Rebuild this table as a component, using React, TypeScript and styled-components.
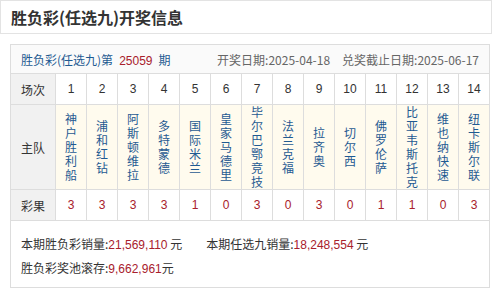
import React from 'react';
import styled, { createGlobalStyle } from 'styled-components';

const GlobalStyle = createGlobalStyle`
  body {
    margin: 0;
    background: #fff;
    font-family: 'Liberation Sans', 'Noto Sans CJK SC', sans-serif;
    font-size: 12px;
    color: #333;
  }
`;

const StyledTitleBar = styled.div`
  box-sizing: border-box;
  height: 34px;
  border: 1px solid #e3e3e3;
  display: flex;
  align-items: center;
  padding-left: 10px;
  margin-bottom: 10px;
`;
const StyledTitle = styled.h2`
  margin: 0;
  font-size: 16px;
  font-weight: bold;
  color: #333;
  font-family: 'Noto Sans CJK SC', sans-serif;
`;
const StyledPanel = styled.div`
  box-sizing: border-box;
  width: 480px;
  margin-left: 10px;
  border: 1px solid #dddddd;
`;
const StyledInfoRow = styled.div`
  height: 28px;
  display: flex;
  align-items: center;
  justify-content: space-between;
  padding: 0 10px;
  background: #fafafa;
  border-bottom: 1px solid #dddddd;
  font-family: 'Noto Sans CJK SC', sans-serif;
`;
const StyledIssue = styled.span`
  color: #1f5a92;
`;
const StyledRed = styled.span<{ $spaced?: boolean }>`
  color: #a8202c;
  font-family: 'Liberation Sans', sans-serif;
  margin: ${(p) => (p.$spaced ? '0 6px' : '0')};
`;
const StyledDates = styled.div`
  display: flex;
  gap: 12px;
  color: #666;
`;
const StyledGrid = styled.div`
  display: grid;
  grid-template-columns: 44px repeat(14, 30px);
  grid-template-rows: 30px 84px 30px;
  gap: 1px;
  background: #dddddd;
`;
const StyledCell = styled.div<{ $head?: boolean; $team?: boolean }>`
  display: flex;
  align-items: center;
  justify-content: center;
  background: ${(p) => (p.$head ? '#f1f1f1' : p.$team ? '#fffbee' : '#fff')};
  color: ${(p) => (p.$team ? '#1f5a92' : '#333')};
  font-family: 'Noto Sans CJK SC', sans-serif;
`;
const StyledTeamName = styled.span`
  width: 12px;
  line-height: 14px;
  word-break: break-all;
  text-align: center;
`;
const StyledNum = styled.span`
  font-family: 'Liberation Sans', sans-serif;
  color: #333;
`;
const StyledResult = styled.span`
  font-family: 'Liberation Sans', sans-serif;
  color: #a8202c;
`;
const StyledFooter = styled.div`
  border-top: 1px solid #dddddd;
  padding: 11px 10px 7px;
  font-family: 'Noto Sans CJK SC', sans-serif;
  color: #333;
`;
const StyledFooterLine = styled.div`
  display: flex;
  gap: 24px;
  line-height: 24px;
  height: 24px;
`;

const teams = [
  '神户胜利船', '浦和红钻', '阿斯顿维拉', '多特蒙德', '国际米兰', '皇家马德里', '毕尔巴鄂竞技',
  '法兰克福', '拉齐奥', '切尔西', '佛罗伦萨', '比亚韦斯托克', '维也纳快速', '纽卡斯尔联',
];
const results = ['3', '3', '3', '3', '1', '0', '3', '0', '3', '0', '1', '1', '0', '3'];

export default function App() {
  return (
    <>
      <GlobalStyle />
      <StyledTitleBar>
        <StyledTitle>胜负彩(任选九)开奖信息</StyledTitle>
      </StyledTitleBar>
      <StyledPanel>
        <StyledInfoRow>
          <StyledIssue>
            胜负彩(任选九)第<StyledRed $spaced>25059</StyledRed>期
          </StyledIssue>
          <StyledDates>
            <span>开奖日期:2025-04-18</span>
            <span>兑奖截止日期:2025-06-17</span>
          </StyledDates>
        </StyledInfoRow>
        <StyledGrid>
          <StyledCell $head>场次</StyledCell>
          {teams.map((_, i) => (
            <StyledCell key={'n' + i}>
              <StyledNum>{i + 1}</StyledNum>
            </StyledCell>
          ))}
          <StyledCell $head>主队</StyledCell>
          {teams.map((t) => (
            <StyledCell key={t} $team>
              <StyledTeamName>{t}</StyledTeamName>
            </StyledCell>
          ))}
          <StyledCell $head>彩果</StyledCell>
          {results.map((r, i) => (
            <StyledCell key={'r' + i}>
              <StyledResult>{r}</StyledResult>
            </StyledCell>
          ))}
        </StyledGrid>
        <StyledFooter>
          <StyledFooterLine>
            <span>
              本期胜负彩销量:<StyledRed>21,569,110</StyledRed> 元
            </span>
            <span>
              本期任选九销量:<StyledRed>18,248,554</StyledRed> 元
            </span>
          </StyledFooterLine>
          <StyledFooterLine>
            <span>
              胜负彩奖池滚存:<StyledRed>9,662,961</StyledRed>元
            </span>
          </StyledFooterLine>
        </StyledFooter>
      </StyledPanel>
    </>
  );
}
